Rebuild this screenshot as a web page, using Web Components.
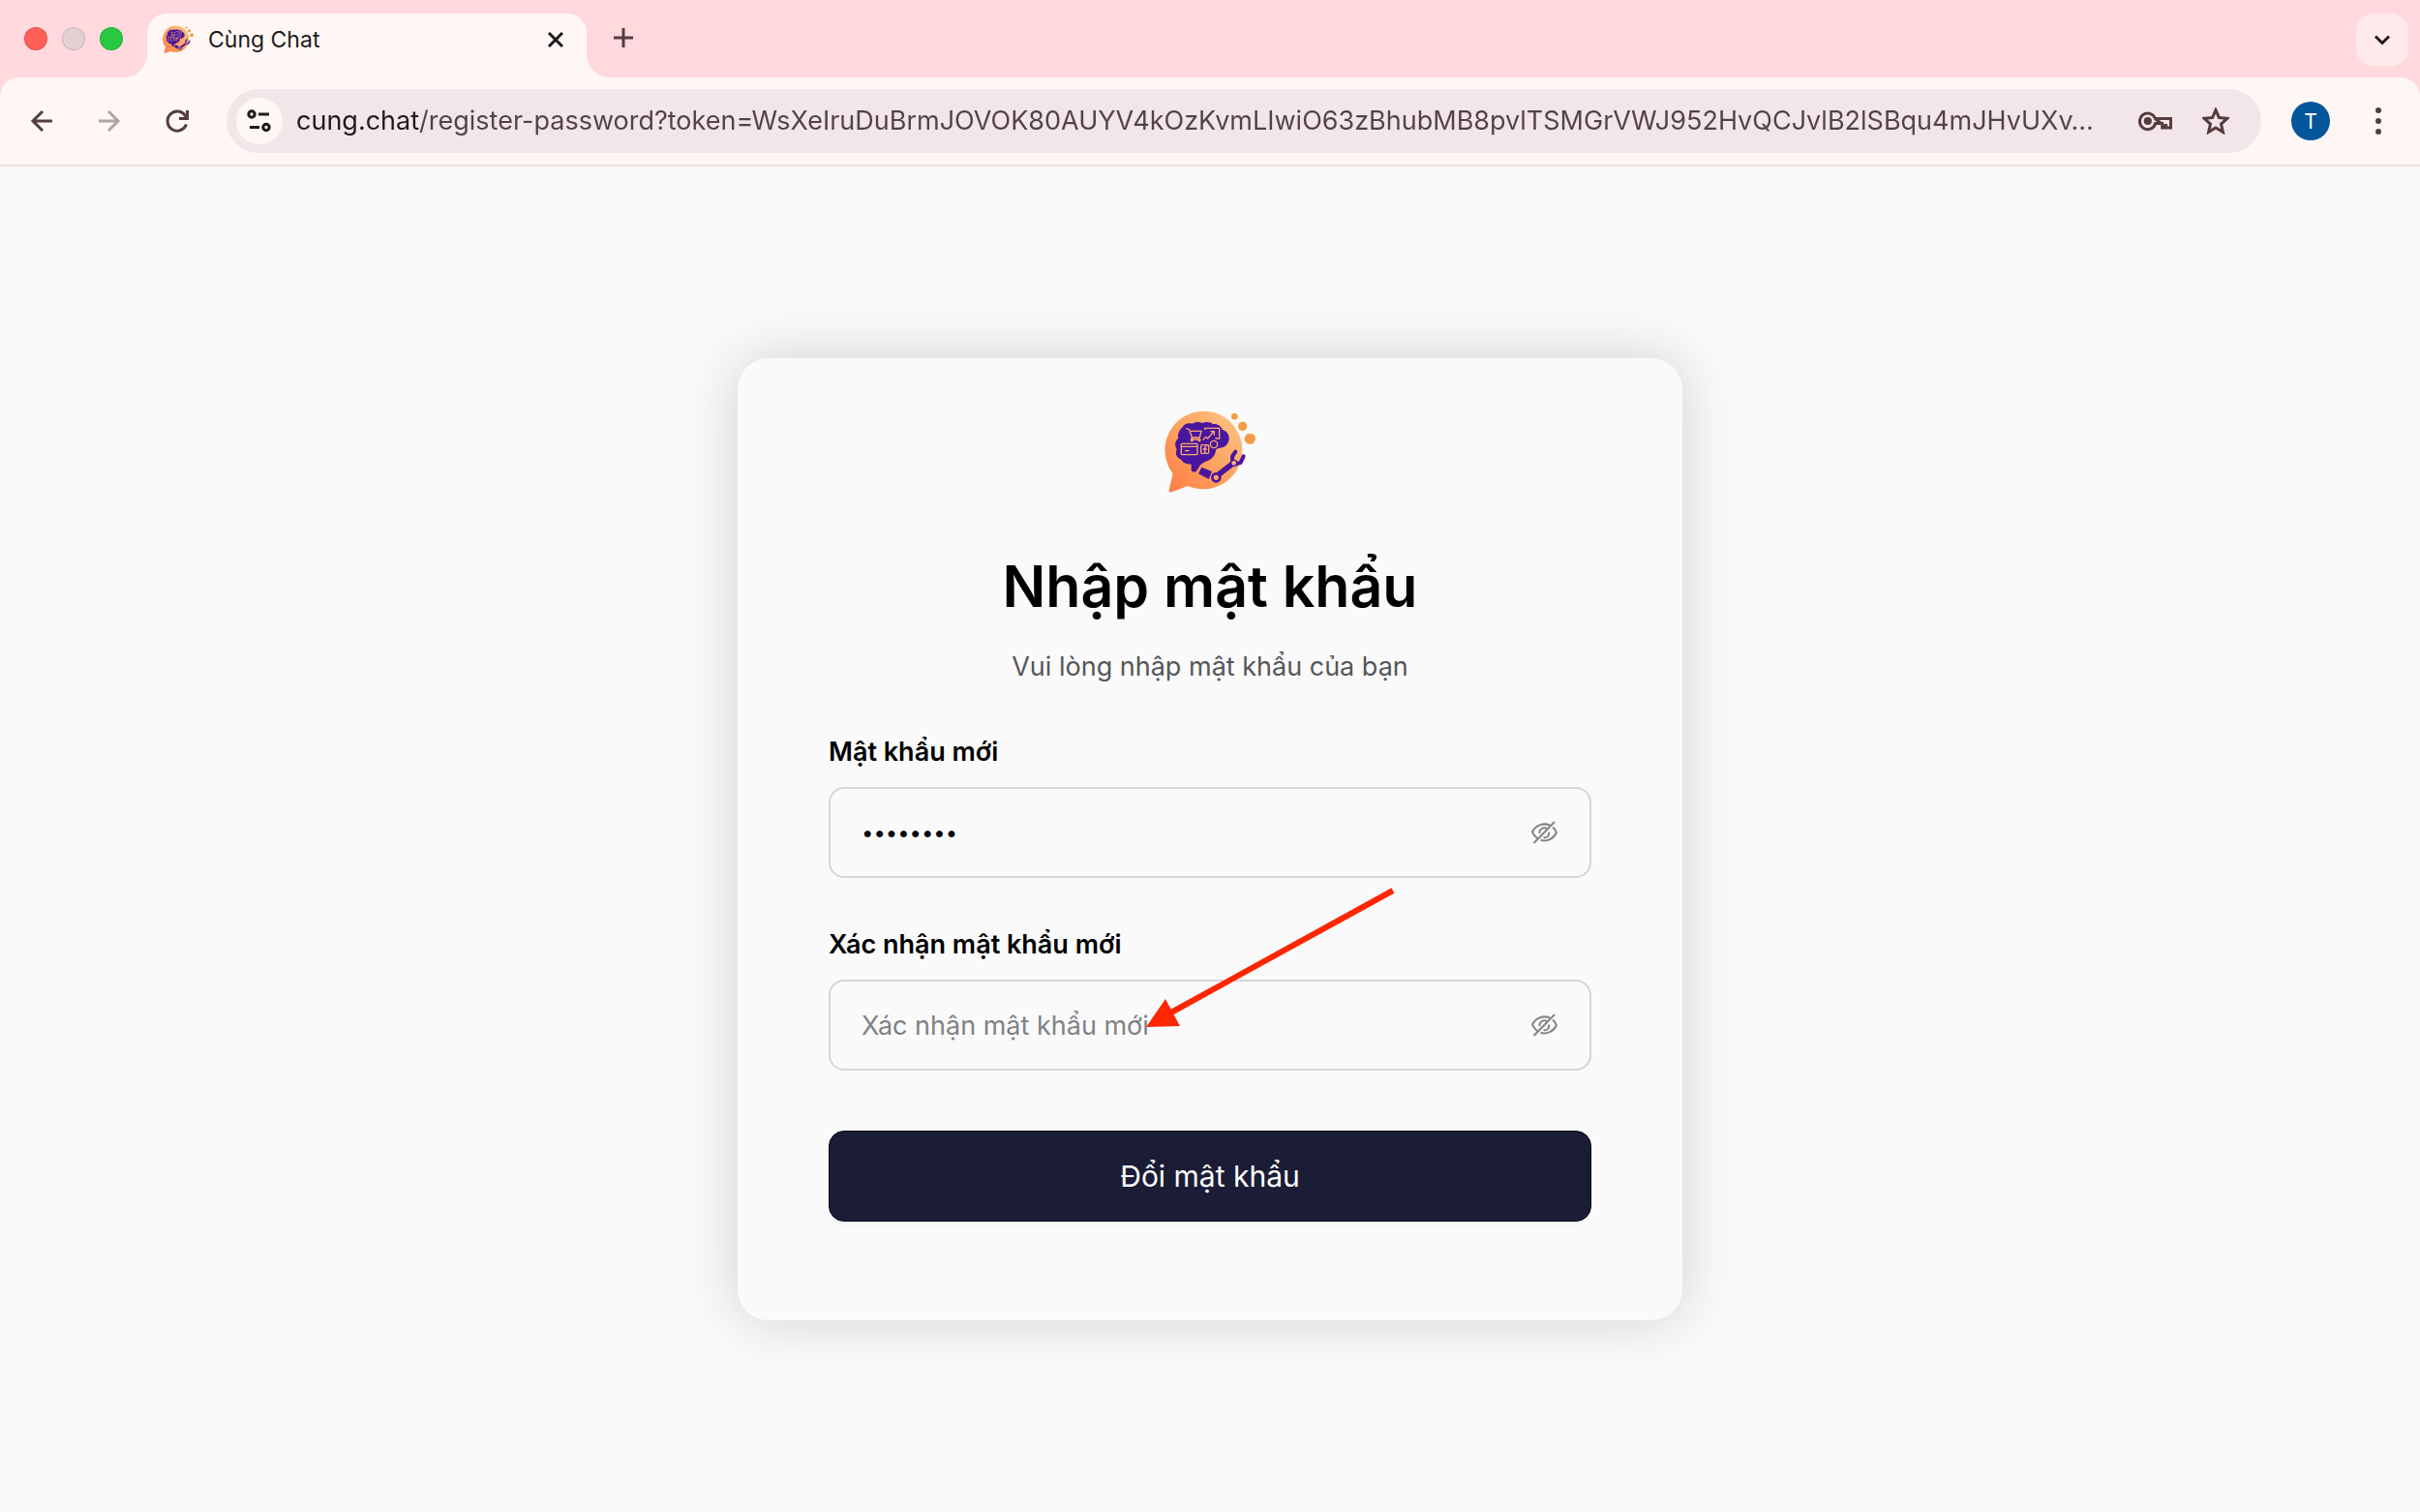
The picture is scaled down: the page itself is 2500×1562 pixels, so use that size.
<!DOCTYPE html>
<html lang="vi">
<head>
<meta charset="utf-8">
<meta name="viewport" content="width=device-width, initial-scale=1">
<title>Cùng Chat</title>
<style>
    body {
        margin: 0;
        min-height: 100vh;
        display: flex;
        flex-direction: column;
        background: #fafafa;
        color: #000;
        font-family: Inter, "Noto Sans", sans-serif;
    }
    main {
        flex: 1;
        display: flex;
        align-items: center;
        justify-content: center;
    }
</style>
</head>
<body>
<browser-bar tab-title="Cùng Chat" initial="T"
    url="cung.chat/register-password?token=WsXeIruDuBrmJOVOK80AUYV4kOzKvmLIwiO63zBhubMB8pvlTSMGrVWJ952HvQCJvlB2lSBqu4mJHvUXv…"></browser-bar>
<main>
    <password-card>
        <span slot="title">Nhập mật khẩu</span>
        <span slot="subtitle">Vui lòng nhập mật khẩu của bạn</span>
        <password-field label="Mật khẩu mới" value="12345678"></password-field>
        <password-field label="Xác nhận mật khẩu mới" placeholder="Xác nhận mật khẩu mới"></password-field>
        <submit-button slot="action">Đổi mật khẩu</submit-button>
        <pointer-arrow slot="overlay"></pointer-arrow>
    </password-card>
</main>

<script>
class ChatLogo extends HTMLElement {
    constructor() {
        super();
        this.attachShadow({ mode: 'open' });
    }

    connectedCallback() {
        this.shadowRoot.innerHTML = `
            <style>
                :host { display: block; width: 100px; height: 94px; }
                svg { display: block; width: 100%; height: 100%; }
            </style>
            <svg viewBox="60 60 300 282" aria-hidden="true">
                <defs>
                    <linearGradient id="bubble" x1="0" y1="1" x2="1" y2="0">
                        <stop offset="0" stop-color="#ff7a45"/>
                        <stop offset=".45" stop-color="#fe9f5c"/>
                        <stop offset="1" stop-color="#f9c987"/>
                    </linearGradient>
                </defs>
                <path fill="url(#bubble)" d="M191 74a121 121 0 1 1-50 232l-49 19c-6 2-10-1-9-7l12-50A121 121 0 0 1 191 74z"/>
                <g fill="#f59a45">
                    <circle cx="286" cy="91" r="10"/>
                    <circle cx="311" cy="121" r="14"/>
                    <circle cx="334" cy="160" r="17"/>
                </g>
                <path fill="#4a169f" d="M125 124c4-11 19-15 30-11 9-6 23-7 31-2 11-5 26-3 33 3 14-2 26 6 29 17 14 5 22 15 21 29-1 16-12 28-30 29-5 1-9 2-11 5-1 16-10 27-24 33-14 6-24 11-27 19l-8 12c-2 7-16 6-17-1v-18c-14 0-27-5-31-14-14-6-20-17-14-32-8-14-5-28 5-34-4-14 4-28 13-35z"/>
                <g fill="none" stroke="#fba968" stroke-width="4">
                    <path d="M136 128l10 3 8 25h24l5-20h-34M154 156l-2 6h28"/>
                    <circle cx="154" cy="164" r="3"/>
                    <circle cx="177" cy="164" r="3"/>
                    <path d="M194 132v-5h45v32h-13M188 164l9-10 6 5 19-22M211 137h12v12"/>
                    <rect x="121" y="175" width="50" height="34" rx="3"/>
                    <path d="M121 184h50M132 197h14"/>
                    <rect x="182" y="179" width="24" height="26" rx="3"/>
                    <path d="M201 183c-6-1-7 2-7 6v15M188 192h13"/>
                    <circle cx="222" cy="177" r="11"/>
                </g>
                <path fill="#4a169f" d="M184 248l32 13-10 24-32-17z"/>
                <path fill="none" stroke="#4a169f" stroke-width="17" stroke-linecap="round" d="M229 277l51-40"/>
                <path fill="none" stroke="#4a169f" stroke-width="12" stroke-linecap="round" stroke-linejoin="round" d="M280 235l-1-20 10-15M285 239l20-5 9-20"/>
                <circle cx="229" cy="280" r="12" fill="#fca566" stroke="#4a169f" stroke-width="8"/>
                <circle cx="284" cy="235" r="9" fill="#fbb674" stroke="#4a169f" stroke-width="4"/>
            </svg>
        `;
    }
}

const ICONS = {
    back: '<path d="M25 14H5M15 4L5 14l10 10"/>',
    forward: '<path d="M3 14h20M13 4l10 10-10 10"/>',
    reload: '<path d="M23.500 17.500A10 10 0 1 1 22 8l2 3M24.500 3v8.500H16"/>',
    close: '<path d="M7 7l14 14M21 7L7 21"/>',
    plus: '<path d="M14 4v20M4 14h20"/>',
    chevron: '<path d="M7 10.500l7 7 7-7"/>',
    tune: '<circle cx="6" cy="7" r="3.200"/><path d="M13 7h11M4 20.500h10"/><circle cx="21" cy="20.500" r="3.200"/>',
    star: '<path stroke-linejoin="miter" d="M14 2.600l3.400 7.900 8.600.8-6.500 5.700 1.900 8.400L14 21l-7.400 4.400L8.500 17 2 11.300l8.600-.8z"/>',
    key: '<path d="M17.500 11.500h16v9.500h-4.800v-4M28.700 21h-4v-4.500h-7A8.300 8.300 0 1 1 17.500 11.500z"/><circle cx="9.800" cy="14" r="2.600" fill="currentColor"/>',
    menu: '<g fill="currentColor" stroke="none"><circle cx="14" cy="3" r="3"/><circle cx="14" cy="14" r="3"/><circle cx="14" cy="25" r="3"/></g>',
    'eye-off': '<path d="M20 6.500C13 3.500 5 7 2 13.500c1 3 3 5 5 6.500M10.500 21.800C17 24 24 20.500 27 14c-1-2.500-2-4-4-5.500M17 10c-4-2-8 1-7.500 5M19 13.500c1 4-2 6.500-5.500 5.500M3.500 25L25 3"/>'
};

class UiIcon extends HTMLElement {
    constructor() {
        super();
        this.attachShadow({ mode: 'open' });
    }

    connectedCallback() {
        const name = this.getAttribute('name');
        const width = name === 'key' ? 36 : 28;
        this.shadowRoot.innerHTML = `
            <style>
                :host { display: block; }
                svg {
                    display: block;
                    height: 28px;
                    fill: none;
                    stroke: currentColor;
                    stroke-width: var(--stroke, 3);
                }
            </style>
            <svg width="${width}" viewBox="0 0 ${width} 28" aria-hidden="true">${ICONS[name]}</svg>
        `;
    }
}

class BrowserBar extends HTMLElement {
    constructor() {
        super();
        this.attachShadow({ mode: 'open' });
    }

    connectedCallback() {
        const title = this.getAttribute('tab-title') || '';
        const url = this.getAttribute('url') || '';
        const initial = this.getAttribute('initial') || '';

        this.shadowRoot.innerHTML = `
            <style>
                :host {
                    display: block;
                    background: #ffd9de;
                    color: #553c41;
                    --surface: #fff7f6;
                }
                button {
                    display: flex;
                    align-items: center;
                    justify-content: center;
                    flex: none;
                    padding: 0;
                    border: 0;
                    background: none;
                    color: inherit;
                    font: inherit;
                    cursor: pointer;
                }
                .strip {
                    display: flex;
                    height: 66px;
                    padding: 14px 12px 0 25px;
                }
                .lights {
                    display: flex;
                    gap: 15px;
                    padding-top: 14px;
                    margin-right: 25px;
                }
                .light {
                    width: 24px;
                    height: 24px;
                    border-radius: 50%;
                    background: var(--light);
                    box-shadow: inset 0 0 0 1px rgba(0, 0, 0, .12);
                }
                .tab {
                    position: relative;
                    box-sizing: border-box;
                    display: flex;
                    align-items: center;
                    flex: 0 1 454px;
                    padding: 0 16px 12px 15px;
                    border-radius: 20px 20px 0 0;
                    background: var(--surface);
                    color: #1f1a1b;
                }
                .tab::before, .tab::after {
                    content: "";
                    position: absolute;
                    bottom: 0;
                    width: 24px;
                    height: 24px;
                }
                .tab::before {
                    right: 100%;
                    background: radial-gradient(circle at 0 0, transparent 24px, var(--surface) 24px);
                }
                .tab::after {
                    left: 100%;
                    background: radial-gradient(circle at 100% 0, transparent 24px, var(--surface) 24px);
                }
                chat-logo {
                    width: 34px;
                    height: 32px;
                    margin-right: 14px;
                }
                .title {
                    flex: 1;
                    font-size: 23px;
                    line-height: 28px;
                }
                .close { width: 32px; height: 32px; }
                .add {
                    width: 40px;
                    height: 50px;
                    margin-left: 18px;
                }
                .tabs-menu {
                    width: 54px;
                    height: 54px;
                    margin-left: auto;
                    border-radius: 18px;
                    background: #ffe9eb;
                    color: #1f1a1b;
                }
                .toolbar {
                    display: flex;
                    align-items: center;
                    padding: 12px 8px;
                    border-bottom: 2px solid #f2dde0;
                    border-radius: 20px 20px 0 0;
                    background: var(--surface);
                }
                .tool { width: 70px; height: 48px; }
                .tool:disabled { color: #ada5a6; }
                .address {
                    display: flex;
                    align-items: center;
                    flex: 1;
                    min-width: 0;
                    height: 66px;
                    margin: 0 16px;
                    padding: 0 16px 0 10px;
                    box-sizing: border-box;
                    border-radius: 33px;
                    background: #f2e6e9;
                }
                .site {
                    width: 48px;
                    height: 48px;
                    margin-right: 14px;
                    border-radius: 50%;
                    background: var(--surface);
                    color: #1f1a1b;
                }
                input {
                    flex: 1;
                    min-width: 0;
                    height: 40px;
                    padding: 0;
                    border: 0;
                    outline: 0;
                    background: linear-gradient(90deg, #1f1a1b 128px, #514347 128px);
                    background-clip: text;
                    -webkit-background-clip: text;
                    color: transparent;
                    font: 27px/40px Inter, "Noto Sans", sans-serif;
                    text-overflow: ellipsis;
                }
                .action { width: 62px; height: 48px; }
                .avatar {
                    display: flex;
                    align-items: center;
                    justify-content: center;
                    width: 40px;
                    height: 40px;
                    border-radius: 50%;
                    background: #04569b;
                    color: #fff;
                    font-size: 21px;
                }
            </style>
            <div class="strip">
                <div class="lights">
                    <span class="light" style="--light: #ff5f57"></span>
                    <span class="light" style="--light: #e2d0d3"></span>
                    <span class="light" style="--light: #28c840"></span>
                </div>
                <div class="tab">
                    <chat-logo></chat-logo>
                    <span class="title">${title}</span>
                    <button class="close" aria-label="Close tab"><ui-icon name="close"></ui-icon></button>
                </div>
                <button class="add" aria-label="New tab"><ui-icon name="plus"></ui-icon></button>
                <button class="tabs-menu" aria-label="Search tabs"><ui-icon name="chevron"></ui-icon></button>
            </div>
            <div class="toolbar">
                <button class="tool" aria-label="Back"><ui-icon name="back"></ui-icon></button>
                <button class="tool" aria-label="Forward" disabled><ui-icon name="forward"></ui-icon></button>
                <button class="tool" aria-label="Reload"><ui-icon name="reload"></ui-icon></button>
                <div class="address">
                    <button class="site" aria-label="Site information"><ui-icon name="tune"></ui-icon></button>
                    <input type="text" aria-label="Address" value="${url}" spellcheck="false">
                    <button class="action" aria-label="Passwords"><ui-icon name="key"></ui-icon></button>
                    <button class="action" aria-label="Bookmark"><ui-icon name="star"></ui-icon></button>
                </div>
                <button class="tool" aria-label="Profile"><span class="avatar">${initial}</span></button>
                <button class="tool" aria-label="Menu"><ui-icon name="menu"></ui-icon></button>
            </div>
        `;
    }
}

class PasswordCard extends HTMLElement {
    constructor() {
        super();
        this.attachShadow({ mode: 'open' });
    }

    connectedCallback() {
        this.shadowRoot.innerHTML = `
            <style>
                :host {
                    position: relative;
                    display: block;
                    box-sizing: border-box;
                    width: 100%;
                    max-width: 976px;
                    padding: 50px 94px 102px;
                    border-radius: 32px;
                    background: #fafafa;
                    box-shadow: 0 0 60px rgba(0, 0, 0, .17);
                }
                chat-logo { margin: 0 auto 54px; }
                h1 {
                    margin: 0 0 28px;
                    font-size: 59px;
                    font-weight: 600;
                    line-height: 76px;
                    text-align: center;
                }
                p {
                    margin: 0 0 54px;
                    color: #55565b;
                    font-size: 27px;
                    line-height: 34px;
                    text-align: center;
                }
                .fields {
                    display: flex;
                    flex-direction: column;
                    gap: 52px;
                    margin-bottom: 62px;
                }
            </style>
            <chat-logo></chat-logo>
            <h1><slot name="title"></slot></h1>
            <p><slot name="subtitle"></slot></p>
            <form>
                <div class="fields"><slot></slot></div>
                <slot name="action"></slot>
            </form>
            <slot name="overlay"></slot>
        `;
    }
}

class PasswordField extends HTMLElement {
    constructor() {
        super();
        this.attachShadow({ mode: 'open' });
    }

    connectedCallback() {
        const label = this.getAttribute('label') || '';
        const value = this.getAttribute('value') || '';
        const placeholder = this.getAttribute('placeholder') || '';

        this.shadowRoot.innerHTML = `
            <style>
                :host { display: block; }
                label {
                    display: block;
                    margin-bottom: 19px;
                    font-size: 27px;
                    font-weight: 600;
                    line-height: 34px;
                }
                .box {
                    display: flex;
                    align-items: center;
                    box-sizing: border-box;
                    height: 94px;
                    padding: 0 33px 0 32px;
                    border: 2px solid #d6d6d6;
                    border-radius: 16px;
                }
                .box:focus-within { border-color: #1a1d35; }
                input {
                    flex: 1;
                    min-width: 0;
                    height: 60px;
                    padding: 0;
                    border: 0;
                    outline: 0;
                    background: none;
                    color: #000;
                    font: 27px/34px Inter, "Noto Sans", sans-serif;
                }
                /* smaller bullets than the text size gives */
                input[type="password"]:not(:placeholder-shown) { font-size: 22px; }
                input::placeholder { color: #808186; opacity: 1; }
                button {
                    padding: 0;
                    border: 0;
                    background: none;
                    color: #858585;
                    cursor: pointer;
                    --stroke: 2;
                }
            </style>
            <label for="password">${label}</label>
            <div class="box">
                <input id="password" type="password" value="${value}" placeholder="${placeholder}">
                <button type="button" aria-label="Show password"><ui-icon name="eye-off"></ui-icon></button>
            </div>
        `;

        const input = this.shadowRoot.querySelector('input');
        this.shadowRoot.querySelector('button').addEventListener('click', () => {
            input.type = input.type === 'password' ? 'text' : 'password';
        });
    }
}

class SubmitButton extends HTMLElement {
    constructor() {
        super();
        this.attachShadow({ mode: 'open' });
    }

    connectedCallback() {
        this.shadowRoot.innerHTML = `
            <style>
                :host { display: block; }
                button {
                    display: block;
                    width: 100%;
                    height: 94px;
                    padding: 0;
                    border: 1px solid #050717;
                    border-radius: 16px;
                    background: #1a1d35;
                    box-shadow: 0 4px 0 rgba(0, 0, 0, .02);
                    color: #fff;
                    font: 30px/40px Inter, "Noto Sans", sans-serif;
                    cursor: pointer;
                }
            </style>
            <button type="button"><slot></slot></button>
        `;
    }
}

// Red arrow drawn over the card, pointing at the confirm field
class PointerArrow extends HTMLElement {
    constructor() {
        super();
        this.attachShadow({ mode: 'open' });
    }

    connectedCallback() {
        this.shadowRoot.innerHTML = `
            <style>
                :host {
                    position: absolute;
                    left: 418px;
                    top: 545px;
                    pointer-events: none;
                }
                svg { display: block; }
            </style>
            <svg width="264" height="152" viewBox="0 0 264 152" fill="#ff2600" aria-hidden="true">
                <path stroke="#ff2600" stroke-width="6" d="M259 5L28 132"/>
                <path d="M4 146l20-29 15 28z"/>
            </svg>
        `;
    }
}

customElements.define('chat-logo', ChatLogo);
customElements.define('ui-icon', UiIcon);
customElements.define('browser-bar', BrowserBar);
customElements.define('password-card', PasswordCard);
customElements.define('password-field', PasswordField);
customElements.define('submit-button', SubmitButton);
customElements.define('pointer-arrow', PointerArrow);
</script>
</body>
</html>
